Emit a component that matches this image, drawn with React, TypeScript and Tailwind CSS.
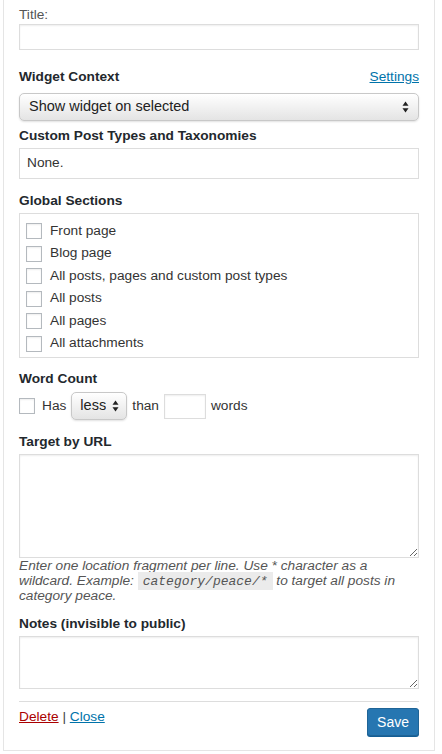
import React from "react";

function SelectArrows() {
  return (
    <svg width="7" height="12" viewBox="0 0 7 12" className="shrink-0">
      <path d="M3.5 0.5 L6.5 4.8 L0.5 4.8 Z" fill="#222" />
      <path d="M3.5 11.5 L6.5 7.2 L0.5 7.2 Z" fill="#222" />
    </svg>
  );
}

function FakeSelect({ label, className }: { label: string; className?: string }) {
  return (
    <div
      className={`flex items-center justify-between h-[28px] border border-[#c8c8c8] rounded-[5px] bg-gradient-to-b from-white to-[#e4e4e4] shadow-[0_1px_2px_rgba(0,0,0,0.12)] text-[#222] text-[14.5px] ${className ?? ""}`}
    >
      <span className="overflow-hidden whitespace-nowrap">{label}</span>
      <SelectArrows />
    </div>
  );
}

function Checkbox() {
  return (
    <input
      type="checkbox"
      className="appearance-none w-4 h-4 shrink-0 m-0 border border-[#b4b9be] bg-white shadow-[inset_0_1px_2px_rgba(0,0,0,0.07)]"
    />
  );
}

const sections = [
  "Front page",
  "Blog page",
  "All posts, pages and custom post types",
  "All posts",
  "All pages",
  "All attachments",
];

export default function App() {
  return (
    <div className="w-[442px] h-[754px] bg-white font-['Liberation_Sans',Arial,sans-serif] text-[13.7px] text-[#444]">
      <div className="ml-[3px] w-[432px] border border-t-0 border-[#e5e5e5] px-[15px] pt-[6px] pb-[14px]">
        {/* Title */}
        <label className="block leading-[18px] text-[#555]">Title:</label>
        <input
          type="text"
          className="block mt-0 w-full h-[26px] border border-[#ddd] shadow-[inset_0_1px_2px_rgba(0,0,0,0.07)] outline-none"
        />

        {/* Widget Context */}
        <div className="mt-[18px] flex items-center justify-between leading-[18px]">
          <span className="font-bold text-[#23282d]">Widget Context</span>
          <a href="#" className="text-[#0073aa] underline">
            Settings
          </a>
        </div>
        <FakeSelect label="Show widget on selected" className="mt-[7px] w-full pl-[9px] pr-[9px]" />

        {/* Custom Post Types */}
        <div className="mt-[6px] font-bold leading-[18px] text-[#23282d]">
          Custom Post Types and Taxonomies
        </div>
        <div className="mt-[3px] h-[31px] border border-[#ddd] flex items-center px-[7px] text-[#333]">
          None.
        </div>

        {/* Global Sections */}
        <div className="mt-[13px] font-bold leading-[18px] text-[#23282d]">Global Sections</div>
        <div className="mt-[3px] h-[145px] border border-[#ddd] pt-[6px] px-[6px]">
          {sections.map((s) => (
            <div key={s} className="flex items-center gap-[8px] h-[22.5px] text-[#333]">
              <Checkbox />
              <span>{s}</span>
            </div>
          ))}
        </div>

        {/* Word Count */}
        <div className="mt-[12px] font-bold leading-[18px] text-[#23282d]">Word Count</div>
        <div className="mt-[4px] flex items-center h-[28px] text-[#333]">
          <Checkbox />
          <span className="ml-[7px]">Has</span>
          <FakeSelect label="less" className="ml-[5px] w-[56px] pl-[8px] pr-[7px]" />
          <span className="ml-[5px]">than</span>
          <input
            type="text"
            className="ml-[5px] w-[42px] h-[25px] border border-[#ddd] shadow-[inset_0_1px_2px_rgba(0,0,0,0.07)] outline-none"
          />
          <span className="ml-[5px]">words</span>
        </div>

        {/* Target by URL */}
        <div className="mt-[13px] font-bold leading-[18px] text-[#23282d]">Target by URL</div>
        <textarea className="block mt-[3px] w-full h-[104px] border border-[#ddd] shadow-[inset_0_1px_2px_rgba(0,0,0,0.07)] outline-none" />
        <p className="mt-0 leading-[15px] italic text-[#555]">
          Enter one location fragment per line. Use * character as a wildcard. Example:{" "}
          <code className="bg-[#ebebeb] px-[5px] pt-[2px] pb-[1px] leading-[10px] italic font-['Liberation_Mono',monospace] text-[13px]">
            category/peace/*
          </code>{" "}
          to target all posts in category peace.
        </p>

        {/* Notes */}
        <div className="mt-[12px] font-bold leading-[18px] text-[#23282d]">
          Notes (invisible to public)
        </div>
        <textarea className="block mt-[3px] w-full h-[53px] border border-[#ddd] shadow-[inset_0_1px_2px_rgba(0,0,0,0.07)] outline-none" />

        <div className="mt-[12px] border-t border-[#ddd]" />

        {/* Actions */}
        <div className="mt-[6px] flex items-start justify-between">
          <div className="leading-[18px] text-[#444]">
            <a href="#" className="text-[#a00] underline">
              Delete
            </a>{" "}
            |{" "}
            <a href="#" className="text-[#0073aa] underline">
              Close
            </a>
          </div>
          <button className="h-[28px] px-[9px] rounded-[3px] bg-[#2676b1] border border-[#1f6496] text-white text-[14px] shadow-[0_1px_0_#135e96]">
            Save
          </button>
        </div>
      </div>
    </div>
  );
}
